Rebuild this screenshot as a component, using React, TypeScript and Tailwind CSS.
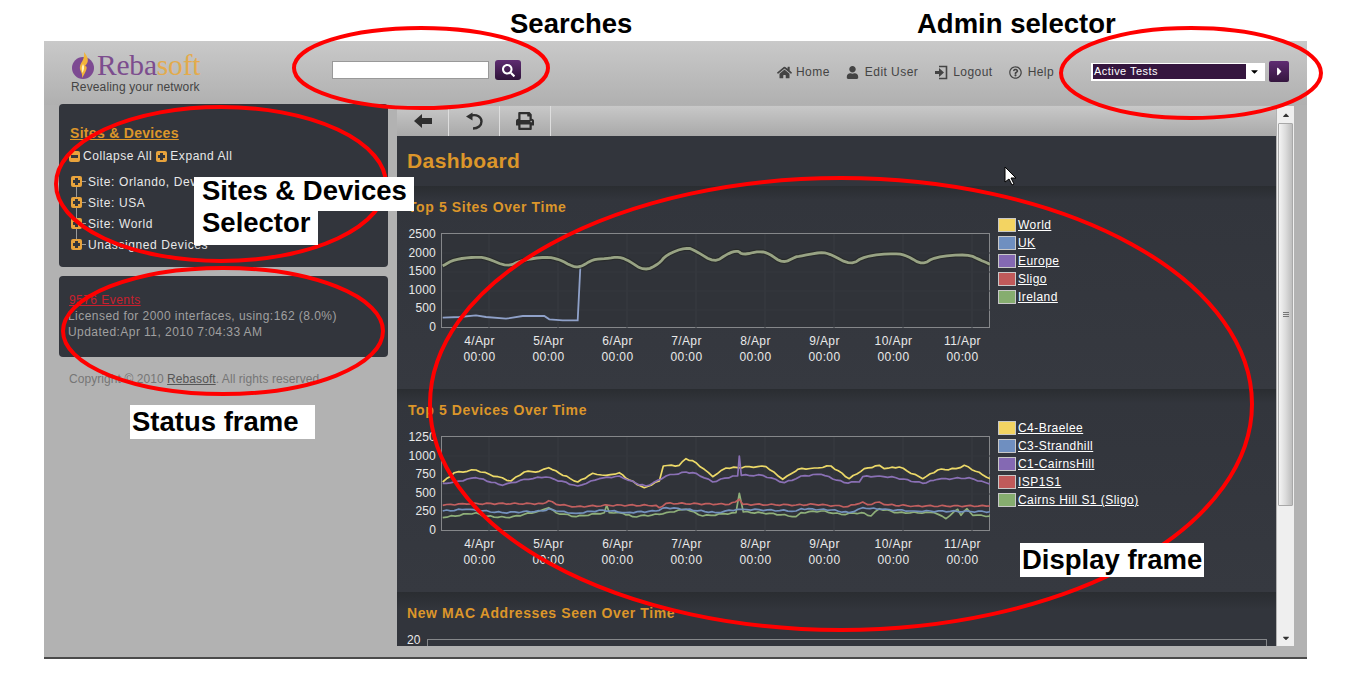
import React from 'react';
import { FaHome, FaUser, FaSearch, FaPrint, FaRegQuestionCircle, FaCaretDown, FaCaretRight, FaCaretUp } from 'react-icons/fa';

type Pt = [number, number];

// traced from the picture, two groups because the plot spans two crops
const toXY = (a: Pt[], b: Pt[], ox: number, oy: number): Pt[] => [
  ...a.map(([x, y]): Pt => [x / 3 + ox, y / 3 + oy]),
  ...b.map(([x, y]): Pt => [x / 3 + ox + 385, y / 3 + oy]),
];

const join = (pts: Pt[]) => pts.map(([x, y]) => `${x.toFixed(1)},${y.toFixed(1)}`).join(' ');

// corner cutting for the slow curves
const smooth = (pts: Pt[]): Pt[] => {
  const out: Pt[] = [pts[0]];
  for (let i = 0; i < pts.length - 1; i++) {
    const [x0, y0] = pts[i];
    const [x1, y1] = pts[i + 1];
    out.push([x0 * 0.75 + x1 * 0.25, y0 * 0.75 + y1 * 0.25], [x0 * 0.25 + x1 * 0.75, y0 * 0.25 + y1 * 0.75]);
  }
  out.push(pts[pts.length - 1]);
  return out;
};

// the device lines are noisy, so split long segments and wobble them a little
const wobble = (pts: Pt[], seed: number): Pt[] => {
  const out: Pt[] = [];
  for (let i = 0; i < pts.length - 1; i++) {
    const [x0, y0] = pts[i];
    const [x1, y1] = pts[i + 1];
    const steps = Math.max(1, Math.round((x1 - x0) / 4));
    for (let s = 0; s < steps; s++) {
      const t = s / steps;
      const n = s === 0 ? 0 : Math.sin(out.length * 1.9 + seed) * 0.7;
      out.push([x0 + (x1 - x0) * t, y0 + (y1 - y0) * t + n]);
    }
  }
  out.push(pts[pts.length - 1]);
  return out;
};

const worldLine = join(smooth(smooth(toXY(
  [[140,225],[175,205],[235,198],[270,200],[335,228],[375,208],[450,197],[490,205],[530,227],[555,228],[590,205],[630,203],[670,197],[700,210],[745,240],[790,218],[810,192],[870,168],[900,180],[955,215],[995,188],[1025,178],[1040,192],[1090,180],[1120,188],[1160,217],[1200,197]],
  [[50,197],[120,183],[150,190],[210,223],[250,195],[345,186],[380,195],[425,222],[460,198],[560,189],[600,208],[628,220]],
  -46, -43,
))));
const ukLine = join(toXY(
  [[140,380],[190,378],[240,373],[270,378],[330,383],[380,375],[445,375],[460,385],[500,388],[545,388],[553,230]],
  [],
  -46, -43,
));

const deviceLines = [
  {
    color: '#8fb07a',
    points: join(wobble(toXY(
      [[140,365],[240,350],[260,360],[340,365],[430,345],[458,335],[480,350],[540,362],[625,350],[632,328],[640,350],[680,352],[710,362],[790,355],[810,350],[870,340],[920,360],[1020,350],[1030,292],[1042,348],[1120,352],[1200,362]],
      [[60,350],[120,345],[180,355],[240,350],[270,360],[295,338],[350,350],[460,350],[495,368],[530,340],[540,358],[558,338],[575,358],[628,360]],
      -46, -41,
    ), 1)),
  },
  {
    color: '#c25f5f',
    points: join(wobble(toXY(
      [[140,328],[200,323],[440,323],[458,314],[480,325],[540,332],[640,328],[780,328],[790,335],[810,322],[1000,325],[1018,318],[1030,310],[1040,325],[1200,327]],
      [[100,325],[200,332],[245,318],[260,326],[295,318],[310,326],[400,330],[628,330]],
      -46, -41,
    ), 2)),
  },
  {
    color: '#7491bd',
    points: join(wobble(toXY(
      [[140,345],[210,340],[320,350],[440,345],[458,338],[480,345],[540,352],[620,342],[690,350],[780,345],[810,335],[870,340],[960,350],[1025,340],[1040,340],[1200,345]],
      [[60,338],[150,342],[205,350],[245,335],[300,340],[400,345],[628,347]],
      -46, -41,
    ), 3)),
  },
  {
    color: '#ecd968',
    points: join(wobble(toXY(
      [[140,258],[175,230],[240,222],[280,235],[345,255],[385,228],[430,226],[458,215],[490,232],[545,258],[590,232],[630,238],[670,230],[700,252],[745,275],[790,255],[802,210],[850,208],[870,188],[900,200],[950,242],[990,216],[1025,215],[1060,212],[1110,212],[1160,250],[1200,225]],
      [[50,220],[100,216],[150,210],[205,248],[250,218],[295,208],[310,218],[355,213],[425,248],[470,222],[525,218],[550,208],[628,248]],
      -46, -41,
    ), 4)),
  },
  {
    color: '#8a70b5',
    points: join(wobble(toXY(
      [[140,262],[175,258],[240,245],[320,268],[385,250],[450,243],[545,270],[610,248],[670,240],[720,262],[750,270],[795,250],[810,240],[870,228],[900,232],[950,258],[1010,240],[1025,240],[1030,180],[1036,238],[1100,238],[1165,260],[1200,248]],
      [[60,240],[120,235],[190,260],[235,258],[245,242],[295,240],[345,245],[425,262],[470,250],[565,245],[628,265]],
      -46, -41,
    ), 5)),
  },
];

const days = ['4/Apr', '5/Apr', '6/Apr', '7/Apr', '8/Apr', '9/Apr', '10/Apr', '11/Apr'];
const swatches = ['bg-[#f3d462]', 'bg-[#6f8fc0]', 'bg-[#8469b3]', 'bg-[#c05a5a]', 'bg-[#86ad6f]'];

const PlusBox = ({ minus }: { minus?: boolean }) => (
  <span className="relative inline-block w-[11px] h-[11px] rounded-[2px] bg-[#e8a33c] shrink-0">
    <span className="absolute left-[2px] top-[4px] w-[7px] h-[3px] bg-[#32353c]" />
    {!minus && <span className="absolute left-[4px] top-[2px] w-[3px] h-[7px] bg-[#32353c]" />}
  </span>
);

const Grid = () => (
  <>
    {[47, 116, 185, 254, 323, 392, 461, 530].map((x) => (
      <line key={x} x1={x} y1={0} x2={x} y2={94} stroke="#393c42" strokeWidth={1} />
    ))}
    {[19, 38, 57, 76].map((y) => (
      <line key={y} x1={0} y1={y} x2={548} y2={y} stroke="#35383e" strokeWidth={1} />
    ))}
  </>
);

const Chart = ({ title, ticks, legend, children }: { title: string; ticks: string[]; legend: string[]; children: React.ReactNode }) => (
  <section className="h-[203px] pt-[12px] pl-[11px] bg-gradient-to-b from-[#2a2d31] via-[#32353c] via-[7%] to-[#363940]">
    <h2 className="text-[14px] leading-[18px] font-bold tracking-[0.6px] text-[#dc962a]">{title}</h2>
    <div className="flex mt-[17px] h-[94px]">
      <div className="w-[28px] h-[107px] -mt-[6px] flex flex-col justify-between items-end text-[12px] leading-[14px] text-[#e9e9e9] tracking-[0.2px]">
        {ticks.map((t) => <span key={t}>{t}</span>)}
      </div>
      <div className="ml-[5px] w-[549px] h-[95px] border border-[#85878a] bg-[#303339]">
        <svg width="548" height="94" viewBox="0 0 548 94" className="block">
          <Grid />
          {children}
        </svg>
      </div>
      <ul className="ml-[8px] -mt-[17px] text-[12px] leading-[18px] text-white tracking-[0.45px]">
        {legend.map((name, i) => (
          <li key={name} className="flex items-center h-[18px]">
            <span className="w-[18px] h-[14px] border border-[#c8c8c8] mr-[2px] shrink-0">
              <span className={`block w-full h-full ${swatches[i]}`} />
            </span>
            <a className="underline">{name}</a>
          </li>
        ))}
      </ul>
    </div>
    <div className="grid grid-cols-8 w-[552px] ml-[37px] mt-[6px] text-center text-[12px] leading-[16px] text-[#e9e9e9] tracking-[0.4px]">
      {days.map((d) => (
        <div key={d}>{d}<br />00:00</div>
      ))}
    </div>
  </section>
);

const NavItem = ({ icon, label, gap }: { icon: React.ReactNode; label: string; gap: string }) => (
  <a className={`flex items-center text-[12px] text-[#444] tracking-[0.45px] ${gap}`}>
    {icon}
    <span>{label}</span>
  </a>
);

const App: React.FC = () => {
  return (
    <div className="relative w-[1350px] h-[700px] overflow-hidden bg-white pt-[41px] pl-[44px] font-['Liberation_Sans',Arial,sans-serif]">
      <div className="w-[1263px] h-[618px] bg-[#b2b2b2] border-b-2 border-[#4a4a4a] flex flex-col">
        {/* header */}
        <header className="h-[64px] shrink-0 flex bg-gradient-to-b from-[#c9c9c9] to-[#b0b0b0]">
          <div className="w-[288px] pl-[27px] pt-[10px] shrink-0">
            <div className="flex items-start h-[29px]">
              <svg width="26" height="29" viewBox="0 0 26 29" className="shrink-0">
                <circle cx="12" cy="17" r="11" fill="#7d4a92" />
                <path d="M13 1 C 18 7, 18 11, 14 15 C 17 15, 16 19, 11 27 C 12 21, 8 20, 9 15 C 10 11, 14 8, 13 1 Z" fill="#f2b53a" />
                <path d="M12 13 C 14 16, 13 19, 11.5 22 C 11 19, 10 17, 12 13 Z" fill="#fff3c0" />
              </svg>
              <span className="font-['Liberation_Serif',serif] text-[29.5px] leading-[29px] -tracking-[0.2px] text-[#7c4d8e]">
                Reba<span className="text-[#e3ab4d]">soft</span>
              </span>
            </div>
            <p className="text-[12px] leading-[14px] text-[#444] tracking-[0.15px]">Revealing your network</p>
          </div>
          <div className="flex items-center h-[20px] mt-[19px]">
            <input className="w-[157px] h-[18px] bg-white border border-[#999] outline-none" />
            <button className="ml-[6px] w-[26px] h-[20px] rounded-[3px] bg-gradient-to-b from-[#5f2c72] to-[#2f1339] flex items-center justify-center text-white">
              <FaSearch size={13} />
            </button>
          </div>
          <nav className="absolute left-[777px] top-[64px] flex items-center h-[16px]">
            <NavItem icon={<FaHome size={15} />} label="Home" gap="gap-[4px]" />
            <span className="w-[16px]" />
            <NavItem icon={<FaUser size={13} />} label="Edit User" gap="gap-[6px]" />
            <span className="w-[16px]" />
            <NavItem
              icon={
                <svg width="14" height="15" viewBox="0 0 14 15" className="shrink-0">
                  <path d="M5 1.5 H12.5 V13.5 H5" fill="none" stroke="#444" strokeWidth="1.6" />
                  <path d="M1 6 H5 V3 L10 7.5 L5 12 V9 H1 Z" fill="#444" />
                </svg>
              }
              label="Logout"
              gap="gap-[5px]"
            />
            <span className="w-[16px]" />
            <NavItem icon={<FaRegQuestionCircle size={13} />} label="Help" gap="gap-[6px]" />
          </nav>
          <div className="absolute left-[1091px] top-[61px] flex items-center">
            <div className="w-[174px] h-[18px] bg-white flex items-center pl-[2px] pr-[4px]">
              <span className="w-[153px] h-[15px] bg-[#35163f] text-white text-[11px] leading-[15px] pl-[1px] tracking-[0.45px]">Active Tests</span>
              <FaCaretDown size={11} className="ml-[3px] text-black" />
            </div>
            <button className="ml-[4px] w-[20px] h-[21px] rounded-[2px] bg-gradient-to-b from-[#5f2c72] to-[#35163f] flex items-center justify-center text-white">
              <FaCaretRight size={13} />
            </button>
          </div>
        </header>

        <div className="flex flex-1 min-h-0 -mt-[1px]">
          {/* left column */}
          <aside className="w-[353px] pl-[15px] pr-[9px] shrink-0">
            <div className="h-[163px] rounded-[4px] bg-[#32353c] pl-[11px] pt-[21px] text-[12px] text-[#e8e8e8]">
              <a className="block text-[14px] leading-[16px] font-bold underline tracking-[0.3px] text-[#dc962a]">Sites &amp; Devices</a>
              <div className="flex items-center mt-[7px] h-[16px] -ml-[1px] tracking-[0.55px]">
                <PlusBox minus />
                <span className="ml-[3px]">Collapse All</span>
                <span className="w-[4px]" />
                <PlusBox />
                <span className="ml-[3px]">Expand All</span>
              </div>
              <ul className="relative mt-[7px] tracking-[0.6px]">
                <span className="absolute left-[6px] top-[8px] h-[62px] w-px bg-[#9a9a9a]" />
                {['Site: Orlando, Dev', 'Site: USA', 'Site: World', 'Unassigned Devices'].map((s) => (
                  <li key={s} className="relative flex items-center h-[21px] pl-[1px]">
                    <PlusBox />
                    <span className="w-[4px] h-px bg-[#9a9a9a] mr-[2px]" />
                    <span>{s}</span>
                  </li>
                ))}
              </ul>
            </div>
            <div className="h-[81px] mt-[9px] rounded-[4px] bg-[#32353c] pl-[10px] pt-[16px] text-[12px] leading-[16px] text-[#a0a0a0] tracking-[0.45px]">
              <a className="block underline text-[#c8202e]">9576 Events</a>
              <p className="-ml-[1px]">Licensed for 2000 interfaces, using:162 (8.0%)</p>
              <p className="-ml-[1px]">Updated:Apr 11, 2010 7:04:33 AM</p>
            </div>
            <p className="mt-[14px] pl-[10px] text-[12px] leading-[16px] text-[#767676] tracking-[0.07px]">
              Copyright © 2010 <a className="underline text-[#555]">Rebasoft</a>. All rights reserved.
            </p>
          </aside>

          {/* display frame */}
          <main className="w-[879px] h-[540px] mt-[2px] flex flex-col overflow-hidden shrink-0">
            <div className="h-[30px] shrink-0 pl-[1px] flex bg-gradient-to-b from-[#c8c8c8] to-[#a9a9a9]">
              {[
                <svg key="b" width="20" height="16" viewBox="0 0 20 16">
                  <path d="M1 8 L9 1 V5 H19 V11 H9 V15 Z" fill="#2f2f2f" />
                </svg>,
                <svg key="r" width="18" height="18" viewBox="0 0 18 18">
                  <path d="M6 3.5 C 12 2, 16.5 5, 16.5 9.5 C 16.5 13.5, 13 16.5, 8 16.5" fill="none" stroke="#2f2f2f" strokeWidth="2.4" />
                  <path d="M1 4.5 L7.5 0.5 V8.5 Z" fill="#2f2f2f" />
                </svg>,
                <FaPrint key="p" size={18} />,
              ].map((icon, i) => (
                <span key={i} className="w-[51px] h-full border-r border-[#dedede] flex items-center justify-center text-[#2f2f2f]">
                  {icon}
                </span>
              ))}
            </div>
            <div className="flex-1 min-h-0 overflow-hidden bg-[#32353c]">
              <h1 className="h-[50px] pl-[10px] pt-[12px] text-[21px] leading-[26px] font-bold tracking-[0.4px] text-[#dc962a]">Dashboard</h1>
              <Chart title="Top 5 Sites Over Time" ticks={['2500', '2000', '1500', '1000', '500', '0']} legend={['World', 'UK', 'Europe', 'Sligo', 'Ireland']}>
                <polyline points={ukLine} fill="none" stroke="#8fa1c9" strokeWidth={1.8} />
                <polyline points={worldLine} fill="none" stroke="#23251f" strokeWidth={5} opacity={0.55} />
                <polyline points={worldLine} fill="none" stroke="#98a384" strokeWidth={2.8} />
              </Chart>
              <Chart title="Top 5 Devices Over Time" ticks={['1250', '1000', '750', '500', '250', '0']} legend={['C4-Braelee', 'C3-Strandhill', 'C1-CairnsHill', 'ISP1S1', 'Cairns Hill S1 (Sligo)']}>
                {deviceLines.map((l) => (
                  <polyline key={l.color} points={l.points} fill="none" stroke={l.color} strokeWidth={1.7} strokeLinejoin="round" />
                ))}
              </Chart>
              <section className="h-[60px] pt-[12px] pl-[10px] bg-gradient-to-b from-[#2a2d31] via-[#32353c] via-[30%] to-[#32353c]">
                <h2 className="text-[14px] leading-[18px] font-bold tracking-[0.6px] text-[#dc962a]">New MAC Addresses Seen Over Time</h2>
                <div className="flex mt-[11px]">
                  <span className="text-[12px] leading-[14px] text-[#e9e9e9]">20</span>
                  <span className="ml-[7px] mt-[6px] w-[840px] h-[20px] border border-[#85878a]" />
                </div>
              </section>
            </div>
          </main>

          {/* scrollbar */}
          <div className="ml-[1px] w-[17px] h-[540px] mt-[2px] shrink-0 bg-[#efefef] flex flex-col items-center">
            <span className="h-[17px] flex items-center justify-center text-[#333]"><FaCaretUp size={10} /></span>
            <span className="w-[15px] h-[383px] border border-[#a8a8a8] rounded-[1px] bg-gradient-to-r from-[#f4f4f4] via-[#dcdcdc] to-[#bdbdbd] flex flex-col items-center justify-center gap-[1px]">
              <span className="w-[6px] h-px bg-[#777]" />
              <span className="w-[6px] h-px bg-[#777]" />
              <span className="w-[6px] h-px bg-[#777]" />
            </span>
            <span className="mt-auto h-[17px] flex items-center justify-center text-[#333]"><FaCaretDown size={10} /></span>
          </div>
        </div>
      </div>

      {/* annotations drawn over the screenshot */}
      <svg width="1350" height="700" className="absolute left-0 top-0 pointer-events-none">
        <g fill="none" stroke="#ff0000" strokeWidth={4}>
          <ellipse cx="421" cy="68" rx="127" ry="40" />
          <ellipse cx="1191" cy="73" rx="130" ry="45" />
          <ellipse cx="221" cy="184" rx="165" ry="77" />
          <ellipse cx="223" cy="331" rx="160" ry="63" />
          <ellipse cx="841" cy="404" rx="411" ry="226" />
        </g>
        <path d="M1005 167 L1005 182 L1009 179 L1012 185 L1014 184 L1011 178 L1016 178 Z" fill="#fff" stroke="#000" strokeWidth={1} />
      </svg>
      <span className="absolute left-[510px] top-[9px] text-[27.5px] leading-[30px] font-bold text-black">Searches</span>
      <span className="absolute left-[917px] top-[9px] text-[27.5px] leading-[30px] font-bold text-black">Admin selector</span>
      <div className="absolute left-[194px] top-[177px] text-[27.5px] font-bold text-black">
        <div className="w-[220px] h-[34px] bg-white pl-[8px] leading-[28px]">Sites &amp; Devices</div>
        <div className="w-[124px] h-[34px] bg-white pl-[8px] leading-[24px]">Selector</div>
      </div>
      <div className="absolute left-[130px] top-[405px] w-[185px] h-[34px] bg-white pl-[2px] text-[27.5px] leading-[34px] font-bold text-black">Status frame</div>
      <div className="absolute left-[1020px] top-[543px] w-[184px] h-[34px] bg-white pl-[2px] text-[27.5px] leading-[34px] font-bold text-black">Display frame</div>
    </div>
  );
};

export default App;
